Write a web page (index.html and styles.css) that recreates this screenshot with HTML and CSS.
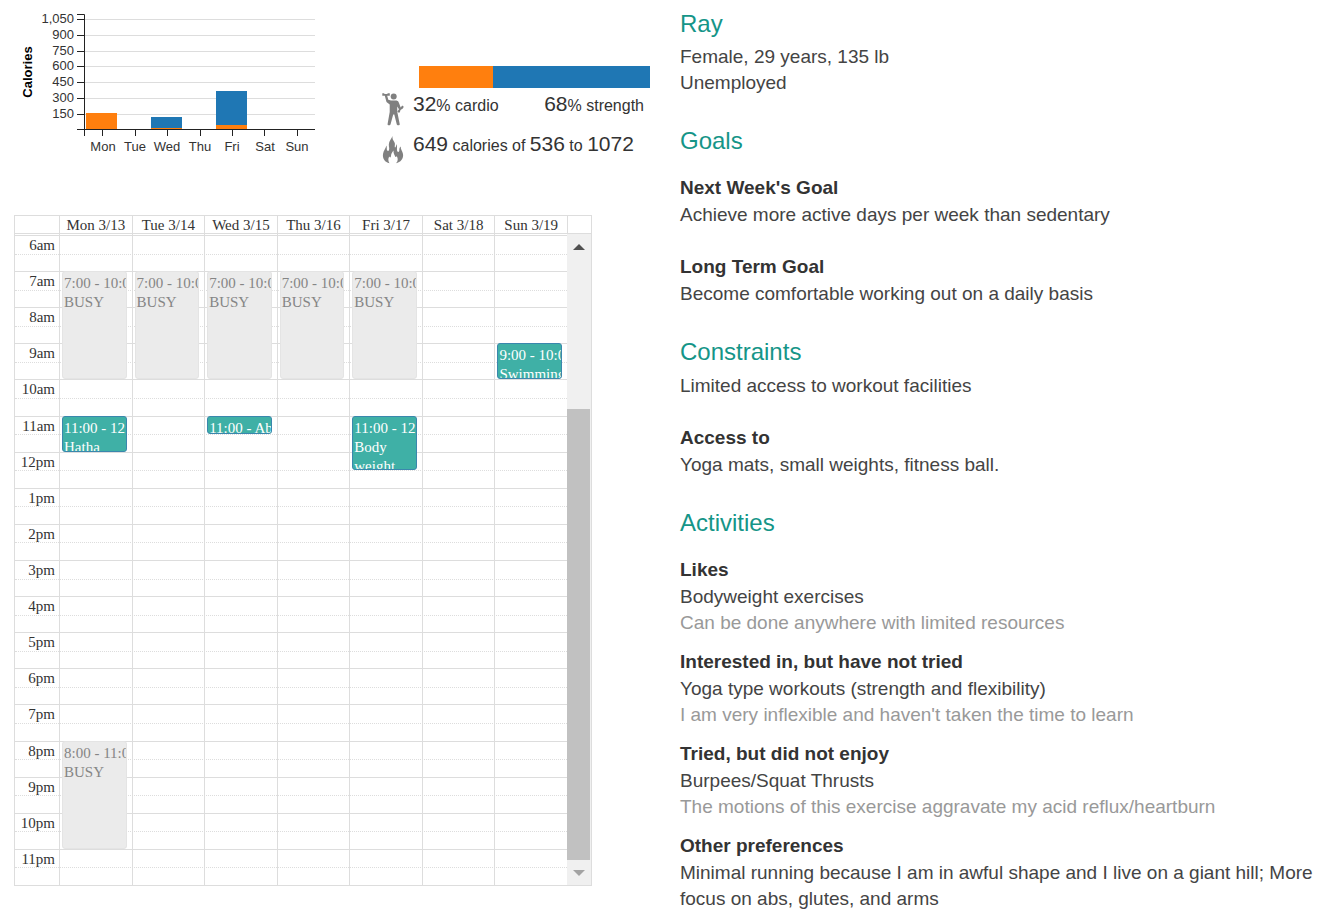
FILE: index.html
```html
<!DOCTYPE html>
<html lang="en">
<head>
<meta charset="utf-8">
<meta name="viewport" content="width=device-width, initial-scale=1">
<title>Ray – weekly exercise plan</title>
<link rel="stylesheet" href="styles.css">
</head>
<body>
<main class="page">
  <div class="plan">
    <div class="overview">
      <svg class="chart" viewBox="0 0 320 160" width="320" height="160" role="img" aria-label="Calories per day">
        <path class="gridline" d="M85 19.500H315M85 35.500H315M85 51.500H315M85 66.500H315M85 82.500H315M85 98.500H315M85 114.500H315"/>
        <rect class="cardio-fill" x="86" y="113" width="31" height="17"/>
        <rect class="strength-fill" x="151" y="117" width="31" height="12"/>
        <rect class="cardio-fill" x="151" y="128" width="31" height="2"/>
        <rect class="strength-fill" x="216" y="91" width="31" height="35"/>
        <rect class="cardio-fill" x="216" y="125" width="31" height="5"/>
        <path class="axis" d="M77 14.500H84.500V136M77 129.500H315M77 19.500H84M77 35.500H84M77 51.500H84M77 66.500H84M77 82.500H84M77 98.500H84M77 114.500H84M102.500 130V136M135.500 130V136M167.500 130V136M200.500 130V136M232.500 130V136M264.500 130V136M297.500 130V136"/>
        <g class="ticks-y">
          <text x="74" y="23">1,050</text>
          <text x="74" y="39">900</text>
          <text x="74" y="55">750</text>
          <text x="74" y="70">600</text>
          <text x="74" y="86">450</text>
          <text x="74" y="102">300</text>
          <text x="74" y="118">150</text>
        </g>
        <g class="ticks-x">
          <text x="103" y="151">Mon</text>
          <text x="135" y="151">Tue</text>
          <text x="167" y="151">Wed</text>
          <text x="200" y="151">Thu</text>
          <text x="232" y="151">Fri</text>
          <text x="265" y="151">Sat</text>
          <text x="297" y="151">Sun</text>
        </g>
        <text class="axis-title" transform="translate(32 72) rotate(-90)">Calories</text>
      </svg>
      <section class="summary" aria-label="Week summary">
        <div class="split"><span class="split-cardio" style="flex-grow:32"></span><span class="split-strength" style="flex-grow:68"></span></div>
        <div class="stat">
          <svg class="icon" viewBox="0 0 22 33" width="22" height="33" aria-hidden="true">
            <circle cx="11.700" cy="3.600" r="3"/>
            <path d="M.3 .3H2.300V1H5.500V.3H7.800V2.800H5.200L6.300 6.800L9 7.600H14.500Q16.500 7.800 17 10L18.700 14.500L20.200 12.500L21.800 13.800L20.800 15.500L18.500 17L17.800 19.500L16 19.500L15.500 18.200L17 16.200L15.200 13.500L15.300 19L17.800 31.500Q16.300 33.200 14.800 31.500L12.300 21.500H11.200L8.500 31.500Q7 33.200 5.500 31.500L7.700 19V11.500L4.500 9L2.800 2.800H.3Z"/>
          </svg>
          <p class="stat-text stat-pair"><span><strong>32</strong>% cardio</span><span><strong>68</strong>% strength</span></p>
        </div>
        <div class="stat">
          <svg class="icon" viewBox="0 0 22 28" width="22" height="28" aria-hidden="true">
            <path d="M10.500 0C9.500 2.500 7 5 6.800 8.500C6.700 11 7.800 12.500 6.800 14.500C6 15.500 4.700 14.500 4.800 13C4.800 11.500 4.800 10.500 4.300 9.500C4 12 1.500 14.500 1 18C.3 22.500 3 26.500 7.500 27.200C6 25 6 22.500 7.300 20.500C8.200 22 8.800 21.500 9 20C9.200 17.500 10.200 16 11.500 14.500C11.300 17.500 12.500 18.500 13.200 20.500C13.700 21.500 14.500 21 14.700 20C16.300 22.500 16 25.500 14 27.200C18.500 26.500 21.800 22.500 21 18C20.500 15 18.500 13.500 18.700 10.500C17.500 11.500 17.200 13 17.300 14.500C17.300 16 15.800 16.500 15.200 15C14.500 13 15.600 10.500 14.500 8C14 10 13.800 11.500 13 11.500C12.300 10 13.800 8 12 5.500C11 4 10.200 2.500 10.500 0Z"/>
          </svg>
          <p class="stat-text"><strong>649</strong> calories of <strong>536</strong> to <strong>1072</strong></p>
        </div>
      </section>
    </div>

    <section class="calendar" aria-label="Week of 3/13">
      <div class="cal-head">
        <span></span><span>Mon 3/13</span><span>Tue 3/14</span><span>Wed 3/15</span><span>Thu 3/16</span><span>Fri 3/17</span><span>Sat 3/18</span><span>Sun 3/19</span><span></span>
      </div>
      <div class="cal-body">
        <div class="cal-view">
          <div class="hours">
            <div class="hour">6am</div>
            <div class="hour">7am</div>
            <div class="hour">8am</div>
            <div class="hour">9am</div>
            <div class="hour">10am</div>
            <div class="hour">11am</div>
            <div class="hour">12pm</div>
            <div class="hour">1pm</div>
            <div class="hour">2pm</div>
            <div class="hour">3pm</div>
            <div class="hour">4pm</div>
            <div class="hour">5pm</div>
            <div class="hour">6pm</div>
            <div class="hour">7pm</div>
            <div class="hour">8pm</div>
            <div class="hour">9pm</div>
            <div class="hour">10pm</div>
            <div class="hour">11pm</div>
          </div>
          <div class="days">
            <div class="day">
              <article class="event busy" style="grid-row:3 / span 6"><div class="time">7:00 - 10:00</div><div>BUSY</div></article>
              <article class="event workout" style="grid-row:11 / span 2"><div class="time">11:00 - 12:00</div><div>Hatha</div></article>
              <article class="event busy" style="grid-row:29 / span 6"><div class="time">8:00 - 11:00</div><div>BUSY</div></article>
            </div>
            <div class="day">
              <article class="event busy" style="grid-row:3 / span 6"><div class="time">7:00 - 10:00</div><div>BUSY</div></article>
            </div>
            <div class="day">
              <article class="event busy" style="grid-row:3 / span 6"><div class="time">7:00 - 10:00</div><div>BUSY</div></article>
              <article class="event workout" style="grid-row:11 / span 1"><div class="time">11:00 - Abs</div></article>
            </div>
            <div class="day">
              <article class="event busy" style="grid-row:3 / span 6"><div class="time">7:00 - 10:00</div><div>BUSY</div></article>
            </div>
            <div class="day">
              <article class="event busy" style="grid-row:3 / span 6"><div class="time">7:00 - 10:00</div><div>BUSY</div></article>
              <article class="event workout" style="grid-row:11 / span 3"><div class="time">11:00 - 12:30</div><div>Body weight</div></article>
            </div>
            <div class="day"></div>
            <div class="day">
              <article class="event workout" style="grid-row:7 / span 2"><div class="time">9:00 - 10:00</div><div>Swimming</div></article>
            </div>
          </div>
        </div>
        <div class="scrollbar">
          <button class="scroll-button" type="button" aria-label="Scroll up"><svg viewBox="0 0 12 6" width="12" height="6"><path d="M6 0L12 6H0Z" fill="#505050"/></svg></button>
          <div class="scroll-track"><div class="scroll-thumb"></div></div>
          <button class="scroll-button" type="button" aria-label="Scroll down"><svg viewBox="0 0 12 6" width="12" height="6"><path d="M0 0H12L6 6Z" fill="#a3a3a3"/></svg></button>
        </div>
      </div>
    </section>
  </div>

  <div class="profile">
    <section>
      <h1>Ray</h1>
      <p>Female, 29 years, 135 lb</p>
      <p>Unemployed</p>
    </section>
    <section>
      <h2>Goals</h2>
      <div class="topic">
        <h3>Next Week's Goal</h3>
        <p>Achieve more active days per week than sedentary</p>
      </div>
      <div class="topic">
        <h3>Long Term Goal</h3>
        <p>Become comfortable working out on a daily basis</p>
      </div>
    </section>
    <section>
      <h2>Constraints</h2>
      <p>Limited access to workout facilities</p>
      <div class="topic">
        <h3>Access to</h3>
        <p>Yoga mats, small weights, fitness ball.</p>
      </div>
    </section>
    <section class="activities">
      <h2>Activities</h2>
      <div class="topic">
        <h3>Likes</h3>
        <p>Bodyweight exercises</p>
        <p class="note">Can be done anywhere with limited resources</p>
      </div>
      <div class="topic">
        <h3>Interested in, but have not tried</h3>
        <p>Yoga type workouts (strength and flexibility)</p>
        <p class="note">I am very inflexible and haven't taken the time to learn</p>
      </div>
      <div class="topic">
        <h3>Tried, but did not enjoy</h3>
        <p>Burpees/Squat Thrusts</p>
        <p class="note">The motions of this exercise aggravate my acid reflux/heartburn</p>
      </div>
      <div class="topic">
        <h3>Other preferences</h3>
        <p>Minimal running because I am in awful shape and I live on a giant hill; More focus on abs, glutes, and arms</p>
      </div>
    </section>
  </div>
</main>
</body>
</html>
```
FILE: styles.css
```css
* { box-sizing: border-box; }

body {
  margin: 0;
  background: #fff;
  color: #333;
  font-family: "Liberation Sans", Arial, sans-serif;
}

h1, h2, h3, p { margin: 0; }

.page {
  display: grid;
  grid-template-columns: minmax(0, 650fr) minmax(0, 643fr);
  column-gap: 30px;
}

/* Overview */
.overview {
  display: flex;
  justify-content: space-between;
  padding-bottom: 51px;
}

.chart { flex: none; }
.gridline { fill: none; stroke: #ddd; }
.axis { fill: none; stroke: #222; }
.cardio-fill { fill: #ff7f0e; }
.strength-fill { fill: #1f77b4; }
.chart text { font-size: 13px; fill: #333; }
.ticks-y { text-anchor: end; }
.ticks-x, .axis-title { text-anchor: middle; }
.chart .axis-title { font-weight: bold; fill: #000; }

.summary {
  width: 268px;
  padding-top: 66px;
}

.split {
  display: flex;
  height: 22px;
  margin-left: 37px;
}
.split-cardio { background: #ff7f0e; }
.split-strength { background: #1f77b4; }

.stat {
  display: flex;
  align-items: flex-end;
  gap: 9px;
  min-height: 38px;
  padding-top: 5px;
}
.stat + .stat { padding-top: 7px; }
.icon { flex: none; fill: #808080; }
.stat-text {
  flex: 1;
  align-self: flex-start;
  font-size: 16px;
  line-height: 22px;
  white-space: nowrap;
}
.stat-text strong { font-size: 21px; font-weight: normal; }
.stat-pair {
  display: flex;
  justify-content: space-between;
  padding-right: 6px;
}

/* Calendar */
.calendar {
  margin: 0 58px 0 14px;
  border: 1px solid #ddd;
  font-family: "Liberation Serif", "Times New Roman", serif;
  font-size: 15px;
  line-height: 19px;
}

.cal-head {
  display: grid;
  grid-template-columns: 44px repeat(7, minmax(0, 1fr)) 24px;
  height: 17px;
  text-align: center;
}
.cal-head span + span { border-left: 1px solid #ddd; }

.cal-body {
  display: grid;
  grid-template-columns: minmax(0, 1fr) 24px;
  border-top: 1px solid #ddd;
}

.cal-view {
  display: grid;
  min-height: 651px;
  padding-top: 1px;
}
.hours, .days { grid-area: 1 / 1; display: grid; }
.hours { grid-template-rows: repeat(18, minmax(0, 1fr)); }
.hour {
  position: relative;
  border-top: 1px solid #ddd;
  display: grid;
  grid-template-columns: 40px;
  text-align: right;
}
/* Half-hour line */
.hour::after {
  content: "";
  position: absolute;
  inset: 50% 0 auto 0;
  border-top: 1px dotted #ddd;
}

.days {
  grid-template-columns: repeat(7, minmax(0, 1fr));
  margin-left: 44px;
}
.day {
  position: relative;
  display: grid;
  grid-template-rows: repeat(36, minmax(0, 1fr));
  padding: 0 5px 0 2px;
  border-left: 1px solid #ddd;
}

/* An event fills its time slots; its text never stretches them */
.event {
  contain: size;
  overflow: hidden;
  padding: 2px 0 0 1px;
  border: 1px solid;
  border-radius: 3px;
}
.event .time { white-space: nowrap; }
.busy { background: #ebebeb; border-color: #e4e4e4; color: #858585; }
.workout { background: #3fb0a6; border-color: #3a87ad; color: #fff; }

.scrollbar {
  display: flex;
  flex-direction: column;
  padding-right: 1px;
  background: #f0f0f0;
}
.scroll-button {
  display: flex;
  align-items: center;
  justify-content: center;
  height: 25px;
  padding: 0;
  border: 0;
  background: none;
}
.scroll-track {
  flex: 1;
  display: flex;
  align-items: flex-end;
}
.scroll-thumb { width: 100%; height: 75%; background: #c1c1c1; }

/* Profile */
.profile {
  padding-top: 11px;
  font-size: 19px;
  line-height: 26px;
}
.profile section + section { margin-top: 32px; }
.profile h1, .profile h2 {
  margin-bottom: 8px;
  color: #159588;
  font-size: 24px;
  font-weight: normal;
  line-height: 26px;
}
.profile h1 { margin-bottom: 7px; }
.profile p { color: #444; }
.profile h3 {
  font-size: 19px;
  line-height: 28px;
}
.topic + .topic, p + .topic { margin-top: 25px; }
h2 + .topic { margin-top: 20px; }
.activities .topic + .topic { margin-top: 12px; }
.profile .note { color: #999; }
```
